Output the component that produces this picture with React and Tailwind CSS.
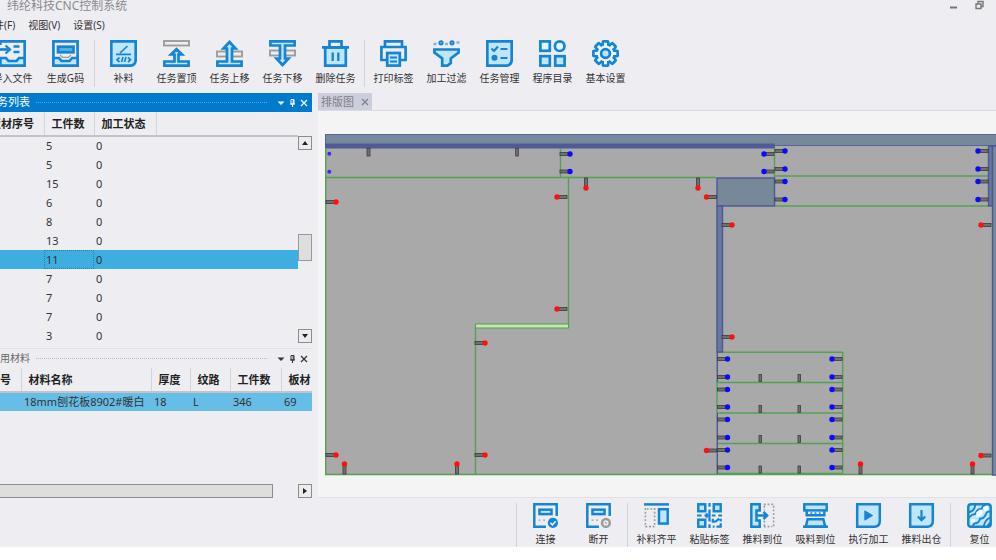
import React, { useState } from "react";

const BLUE = "#1585d3";
const LIGHT = "#bfe6fb";
const GRAY = "#9c9c9c";

function Icon({ children }) {
  return (
    <svg
      width="27"
      height="27"
      viewBox="0 0 27 27"
      fill="none"
      stroke={BLUE}
      strokeWidth="2.7"
      aria-hidden="true"
    >
      {children}
    </svg>
  );
}

const CARD = "M1.3 1.3H25.7V19.5Q25.7 25.7 19.5 25.7H1.3Z";

const icons = {
  importFile: (
    <Icon>
      <path d="M1.3 5V1.3H25.7V18" />
      <path d="M1.4 18H7L9.5 21H17.5L20 18H25.6V25.6H1.4Z" fill={LIGHT} />
      <path d="M0 9.5H9" />
      <path d="M6.5 5.5L11 9.5L6.5 13.5" strokeWidth="2.3" />
      <path d="M14.5 6.5H20.5M14.5 12H20.5" strokeWidth="2.3" />
    </Icon>
  ),
  gcode: (
    <Icon>
      <rect x="1.4" y="1.4" width="24.2" height="24.2" />
      <rect x="6" y="6.7" width="15.5" height="5.6" fill="#59afe4" />
      <path d="M8 15L10.5 17.3H16.5L19 15" stroke={GRAY} strokeWidth="1.2" />
      <path d="M1.4 18H7L9.5 21H17.5L20 18H25.6V25.6H1.4Z" fill={LIGHT} />
    </Icon>
  ),
  patch: (
    <Icon>
      <path d={CARD} fill={LIGHT} />
      <path
        d="M6 14.3H21M10 13L17.5 6M9.5 17.5L7 19.7L9.5 22M18 17.5L20.5 19.7L18 22M13 17L11.5 22M16 17L14.5 22"
        strokeWidth="1.7"
      />
    </Icon>
  ),
  toTop: (
    <Icon>
      <rect x="1" y="1" width="25" height="4.5" stroke={GRAY} strokeWidth="1.9" />
      <path d="M13.5 9.2L19 14.5H15.5V21.5H25.6V25.6H1.4V21.5H11.5V14.5H8Z" fill={LIGHT} />
    </Icon>
  ),
  moveUp: (
    <Icon>
      <rect x="1" y="11.5" width="25" height="5" stroke={GRAY} strokeWidth="1.9" />
      <path d="M13.5 2L19.5 8.5H16V21.5H25.6V25.6H1.4V21.5H11V8.5H7.5Z" fill={LIGHT} />
    </Icon>
  ),
  moveDown: (
    <Icon>
      <rect x="1" y="10.5" width="25" height="5" stroke={GRAY} strokeWidth="1.9" />
      <path d="M13.5 25L19.5 18.5H16V5.5H25.6V1.4H1.4V5.5H11V18.5H7.5Z" fill={LIGHT} />
    </Icon>
  ),
  trash: (
    <Icon>
      <path d="M3.2 7.5H23.8V25.6H3.2Z" fill={LIGHT} />
      <path d="M0 7.3H27M7.5 7V1.4H19.5V7" />
      <path d="M10.7 12.5V21M16.3 12.5V21" strokeWidth="2.3" />
    </Icon>
  ),
  print: (
    <Icon>
      <path d="M5 6V1.4H22V6" />
      <path d="M6 20H1.4V7H25.6V20H21" />
      <rect x="7.2" y="13" width="12.6" height="12.6" fill={LIGHT} />
      <path d="M10 17.5H17M10 21.5H17" strokeWidth="1.8" />
    </Icon>
  ),
  filter: (
    <Icon>
      <path d="M1.4 9.5H25.6V12.5L17.8 18.5V23L14.5 25.6H9.2V18.5L1.4 12.5Z" fill={LIGHT} />
      <circle cx="8" cy="2.8" r="1.6" strokeWidth="2" />
      <circle cx="19" cy="2.8" r="1.6" strokeWidth="2" />
      <path d="M0.5 4H3.5M12 4H15M23.5 2.5H26.5" stroke="#74b9e5" />
    </Icon>
  ),
  manage: (
    <Icon>
      <path d={CARD} fill={LIGHT} />
      <path d="M5.5 8.5L8 11L12 6.5M14.5 9H21.5M14.5 18H21.5" strokeWidth="2.2" />
      <circle cx="8.5" cy="17.8" r="2" fill={BLUE} strokeWidth="2" />
    </Icon>
  ),
  catalog: (
    <Icon>
      <rect x="1.4" y="1.4" width="9.4" height="9.4" fill="#e3f4fd" />
      <circle cx="20.7" cy="6.2" r="4.8" fill="#e3f4fd" />
      <rect x="1.4" y="16.2" width="9.4" height="9.4" fill={LIGHT} />
      <rect x="16.2" y="16.2" width="9.4" height="9.4" fill={LIGHT} />
    </Icon>
  ),
  gear: (
    <Icon>
      {[0, 45, 90, 135, 180, 225, 270, 315].map((a) => (
        <rect
          key={a}
          x="9.5"
          y="0"
          width="8"
          height="7"
          rx="2"
          fill={BLUE}
          stroke="none"
          transform={`rotate(${a} 13.5 13.5)`}
        />
      ))}
      <circle cx="13.5" cy="13.5" r="9.3" fill="#e9f4fb" />
      {[0, 45, 90, 135, 180, 225, 270, 315].map((a) => (
        <rect
          key={a}
          x="12"
          y="2.7"
          width="3"
          height="4"
          fill="#e9f4fb"
          stroke="none"
          transform={`rotate(${a} 13.5 13.5)`}
        />
      ))}
      <circle cx="13.5" cy="13.5" r="4.4" fill={LIGHT} />
    </Icon>
  ),
  connect: (
    <Icon>
      <path d="M14 25.6H1.4V1.4H25.6V14" />
      <rect x="7" y="7.2" width="13" height="4.8" fill={LIGHT} />
      <path d="M6 18.5H8M11 18.5H13" stroke={GRAY} strokeWidth="1.6" />
      <circle cx="21.5" cy="21.5" r="5.5" fill={BLUE} stroke="none" />
      <path d="M18.8 21.5L21 23.6L24.5 19.8" stroke="#e8f5fd" strokeWidth="1.6" />
    </Icon>
  ),
  disconnect: (
    <Icon>
      <path d="M14 25.6H1.4V1.4H25.6V14" />
      <rect x="7" y="7.2" width="13" height="4.8" fill={LIGHT} />
      <path d="M6 18.5H8M11 18.5H13" stroke={GRAY} strokeWidth="1.6" />
      <circle cx="21.5" cy="21.5" r="4.2" fill="#eeeef2" stroke={GRAY} strokeWidth="2.8" />
      <path d="M20.5 20.5L22.5 22.5" stroke={GRAY} strokeWidth="1.2" />
    </Icon>
  ),
  align: (
    <Icon>
      <path d="M0 1.5H27" />
      <path
        d="M1.5 5.5V26M1.5 25.5H11M11.5 5.5V26M3 6.5H11"
        stroke={GRAY}
        strokeWidth="1.7"
        strokeDasharray="2 2"
      />
      <rect x="16.2" y="6.7" width="9.4" height="15.5" fill={LIGHT} />
    </Icon>
  ),
  label: (
    <Icon>
      <rect x="1.4" y="1.4" width="7.5" height="7.5" fill={LIGHT} />
      <rect x="18.1" y="1.4" width="7.5" height="7.5" fill={LIGHT} />
      <rect x="1.4" y="18.1" width="7.5" height="7.5" fill={LIGHT} />
      <path
        d="M13.5 0V4M13.5 7V20M13.5 23V27M0 13.5H5M8 13.5H13M16 13.5H20M23 13.5H27M10.5 11V16M17 17V20H20M25.6 17V20M25.6 22V25.6H21M17 25.6H19M20 20L24 17"
        strokeWidth="2.4"
      />
    </Icon>
  ),
  push: (
    <Icon>
      <path d="M1.4 1.4H10.5V8H7V19H10.5V25.6H1.4Z" fill={LIGHT} />
      <path
        d="M15 1.5H26M25.5 3V26M15 25.5H24M15.5 3V8M15.5 19V25"
        stroke={GRAY}
        strokeWidth="1.7"
        strokeDasharray="2 2"
      />
      <path d="M7 13.5H18M14.5 9.5L18.5 13.5L14.5 17.5" />
    </Icon>
  ),
  suction: (
    <Icon>
      <rect x="1.4" y="1.4" width="24.2" height="6.6" fill={LIGHT} />
      <path d="M4 8V13.3H23V8" />
      <path d="M8 10.8H10M12.5 10.8H14.5M17 10.8H19" strokeWidth="1.6" />
      <path d="M5 17.5H22L24 25.6H3Z" fill={LIGHT} />
      <path d="M0 25.6H27" />
    </Icon>
  ),
  run: (
    <Icon>
      <path d={CARD} fill={LIGHT} />
      <path d="M9.5 8.5L18 13.5L9.5 18.5Z" fill={BLUE} strokeWidth="1" />
    </Icon>
  ),
  output: (
    <Icon>
      <path d={CARD} fill={LIGHT} />
      <path d="M13.5 7.5V18M9.5 14.5L13.5 18.5L17.5 14.5" strokeWidth="2.4" />
    </Icon>
  ),
  reset: (
    <Icon>
      <rect x="1.4" y="1.4" width="24.2" height="24.2" rx="3" fill={LIGHT} />
      <path
        d="M2 10Q8 9 9 2M2 16Q5 12 9 12Q11 6 16 6Q17 2 20 2M25 9Q21 9 20 13Q18 17 14 17Q13 22 8 22L6 25M25 16Q20 17 18 25M25 21L22 25"
        strokeWidth="2"
      />
      <path
        d="M10 10L14 7L18 9L15 14L10 15ZM17 5L22 3L23 7L19 9ZM4 18L9 17L9 20L4 22Z"
        fill="#f4fafe"
        stroke="none"
      />
    </Icon>
  ),
};

const topTools = [
  [
    { icon: "importFile", text: "导入文件" },
    { icon: "gcode", text: "生成G码" },
  ],
  [
    { icon: "patch", text: "补料" },
    { icon: "toTop", text: "任务置顶" },
    { icon: "moveUp", text: "任务上移" },
    { icon: "moveDown", text: "任务下移" },
    { icon: "trash", text: "删除任务" },
  ],
  [
    { icon: "print", text: "打印标签" },
    { icon: "filter", text: "加工过滤" },
    { icon: "manage", text: "任务管理" },
    { icon: "catalog", text: "程序目录" },
    { icon: "gear", text: "基本设置" },
  ],
];

const bottomTools = [
  [
    { icon: "connect", text: "连接" },
    { icon: "disconnect", text: "断开" },
  ],
  [
    { icon: "align", text: "补料齐平" },
    { icon: "label", text: "粘贴标签" },
    { icon: "push", text: "推料到位" },
    { icon: "suction", text: "吸料到位" },
    { icon: "run", text: "执行加工" },
    { icon: "output", text: "推料出仓" },
  ],
  [{ icon: "reset", text: "复位" }],
];

const tasks = [5, 5, 15, 6, 8, 13, 11, 7, 7, 7, 3];

function ToolGroups({ groups }) {
  return groups.map((group, i) => (
    <React.Fragment key={i}>
      {i > 0 && <div className="w-px mx-[2px] shrink-0 bg-[#d2d3dc]"></div>}
      {group.map((tool) => (
        <button
          key={tool.text}
          className="w-[53px] shrink-0 flex flex-col items-center gap-[3px] cursor-pointer"
        >
          {icons[tool.icon]}
          <span className="text-[10px] leading-4 whitespace-nowrap">{tool.text}</span>
        </button>
      ))}
    </React.Fragment>
  ));
}

function PanelTitle({ title, active }) {
  return (
    <div
      className={
        active
          ? "h-[19px] flex items-center gap-[6px] pr-1 bg-[#007acc] text-white text-[11px]"
          : "h-[19px] flex items-center gap-[6px] pr-1 text-[#666] text-[10px]"
      }
    >
      <h2 className={active ? "-ml-[14px] whitespace-nowrap" : "-ml-[10px] whitespace-nowrap"}>
        {title}
      </h2>
      <div
        className={
          active
            ? "flex-1 border-t border-dotted border-[#59a8de]"
            : "flex-1 border-t border-dotted border-[#b9b9c0]"
        }
      ></div>
      <div className={active ? "flex gap-1 pl-1 text-white" : "flex gap-1 pl-1 text-[#333]"}>
        <button aria-label="菜单">
          <svg width="8" height="8" viewBox="0 0 8 8" fill="currentColor">
            <path d="M0.5 2.5H7.5L4 6Z" />
          </svg>
        </button>
        <button aria-label="固定">
          <svg width="7" height="8" viewBox="0 0 7 8" fill="none" stroke="currentColor">
            <path d="M2 .5H5V5H2ZM4.2 1V5M1 5H6M3.5 5V8" />
          </svg>
        </button>
        <button aria-label="关闭">
          <svg width="8" height="8" viewBox="0 0 8 8" fill="none" stroke="currentColor" strokeWidth="1.3">
            <path d="M1 1L7 7M7 1L1 7" />
          </svg>
        </button>
      </div>
    </div>
  );
}

function ScrollButton({ label, d }) {
  return (
    <button
      aria-label={label}
      className="w-[14px] h-[14px] shrink-0 flex items-center justify-center border border-[#8c8c8c] bg-[#ececec]"
    >
      <svg width="6" height="6" viewBox="0 0 6 6" fill="#222">
        <path d={d} />
      </svg>
    </button>
  );
}

// x, y is the head of the drill; side is where the shaft goes from it
function Pin({ x, y, side, color }) {
  const shaft = {
    left: { x: x - 10, y: y - 1.5, width: 9, height: 3 },
    right: { x: x + 1, y: y - 1.5, width: 9, height: 3 },
    up: { x: x - 1.5, y: y - 10, width: 3, height: 9 },
    down: { x: x - 1.5, y: y + 1, width: 3, height: 9 },
  }[side];
  return (
    <g>
      <rect {...shaft} fill="#707070" stroke="#3c3c3c" strokeWidth="0.8" />
      <circle cx={x} cy={y} r="2.7" fill={color} />
    </g>
  );
}

const redPins = [
  [336, 202, "left"],
  [557, 197, "right"],
  [586, 188, "up"],
  [557, 309, "right"],
  [485, 343, "left"],
  [485, 455, "left"],
  [336, 455, "left"],
  [344.5, 464, "down"],
  [457, 464, "down"],
  [698, 188, "up"],
  [706.5, 197, "right"],
  [732, 225, "left"],
  [732, 337, "left"],
  [981, 225, "right"],
  [706.5, 450.5, "right"],
  [860.5, 464, "down"],
  [972.5, 464, "down"],
  [981, 455.5, "right"],
];

const bluePins = [
  [570, 154, "left"],
  [570, 171.5, "left"],
  [764, 154, "right"],
  [764, 171.5, "right"],
  ...[151, 169, 181.5, 199.5].flatMap((y) => [
    [785, y, "left"],
    [978, y, "right"],
  ]),
  ...[359, 377, 389.5, 407, 419.5, 437.5, 450, 467.5].flatMap((y) => [
    [727.5, y, "left"],
    [832, y, "right"],
  ]),
];

function Layout() {
  return (
    <svg viewBox="325 133 671 343" className="block w-full" role="img" aria-label="排版图">
      <rect x="325.5" y="134" width="671" height="341" fill="#a9a9a9" />
      <rect x="325.5" y="134.5" width="680" height="11" fill="#778899" stroke="#5863a3" />
      <rect x="325" y="143.5" width="450" height="5" fill="#505a98" />
      <g fill="none" stroke="#55a055" strokeWidth="1.4">
        <path d="M325.7 148V474.5H996" />
        <path d="M326 177.5H716M560.5 148V177.5M568.5 178V328M475.5 324V474" />
        <path d="M774.5 148V178M775 176H988M775 206H988" />
        <path d="M717 352.3H843M717 382.5H843M717 413H843M717 443.5H843M717 473.5H843M842.7 352V474M717 382V413" />
      </g>
      <rect x="475.5" y="324" width="93" height="4" fill="#c5e6b0" stroke="#55a055" />
      <g fill="#778899" stroke="#4a5798" strokeWidth="1.4">
        <rect x="717" y="178" width="57.5" height="28" />
        <rect x="717" y="206" width="5.5" height="146" fill="#69799d" />
        <rect x="988.5" y="146" width="4" height="60" fill="#69799d" />
        <rect x="992.5" y="146" width="6" height="329" />
        <path d="M717.3 352V382M717.3 413V474" />
      </g>
      <g fill="#707070" stroke="#3c3c3c" strokeWidth="0.8">
        <rect x="367" y="148.5" width="3" height="7.5" />
        <rect x="515.7" y="148.5" width="2.6" height="7.5" />
        {[374.5, 405.5, 435.5, 466].map((y) => (
          <React.Fragment key={y}>
            <rect x="759" y={y} width="2.6" height="7" />
            <rect x="798" y={y} width="2.6" height="7" />
          </React.Fragment>
        ))}
      </g>
      <circle cx="329.3" cy="153.7" r="2" fill="#3030f0" />
      <circle cx="329.3" cy="171.7" r="2" fill="#3030f0" />
      {bluePins.map(([x, y, side]) => (
        <Pin key={`${x}-${y}`} x={x} y={y} side={side} color="#0a0aff" />
      ))}
      {redPins.map(([x, y, side]) => (
        <Pin key={`${x}-${y}`} x={x} y={y} side={side} color="#ff1010" />
      ))}
    </svg>
  );
}

export default function App() {
  const [selected, setSelected] = useState(6);

  return (
    <div className="overflow-hidden bg-[#eeeef2] text-[#333] font-['Noto_Sans','Noto_Sans_CJK_SC',sans-serif]">
      <header>
        <div className="h-[15px] flex items-start justify-between pl-[7px] pr-3">
          <h1 className="-mt-[3px] text-[12px] leading-[18px] text-[#8a8a8e]">纬纶科技CNC控制系统</h1>
          <div className="flex gap-[17px] text-[#777]">
            <button aria-label="最小化">
              <svg width="9" height="10" viewBox="0 0 9 10" stroke="currentColor" strokeWidth="2">
                <path d="M1 7.5H8" />
              </svg>
            </button>
            <button aria-label="还原">
              <svg width="9" height="10" viewBox="0 0 9 10" fill="none" stroke="currentColor" strokeWidth="1.4">
                <path d="M1 4H6V8.5H1ZM3 3.5V1.5H8V6.5H6.5" />
              </svg>
            </button>
          </div>
        </div>
        <nav className="-ml-4 h-[25px] flex items-start gap-[13px] pt-[2px] text-[10px] leading-4">
          <button>文件(F)</button>
          <button>视图(V)</button>
          <button>设置(S)</button>
        </nav>
        <div className="-ml-[14px] mb-[6px] h-[47px] flex">
          <ToolGroups groups={topTools} />
        </div>
      </header>

      <main className="flex gap-[6px]">
        <aside className="w-[312px] shrink-0 flex flex-col overflow-hidden">
          <section className="h-[255px] overflow-hidden">
            <PanelTitle title="任务列表" active />
            <div className="flex">
              <div className="flex-1 overflow-hidden">
                <table className="-ml-[18px] w-[316px] table-fixed border-collapse text-[11px] leading-[18px]">
                  <colgroup>
                    <col className="w-[62px]" />
                    <col className="w-[50px]" />
                    <col className="w-[62px]" />
                    <col />
                  </colgroup>
                  <thead>
                    <tr className="h-6 border-b-2 border-[#c4c4c8] text-left whitespace-nowrap text-[#222]">
                      <th className="p-0 pl-2 border-r border-r-[#d4d4da]">板材序号</th>
                      <th className="p-0 pl-[7px] border-r border-r-[#d4d4da]">工件数</th>
                      <th className="p-0 pl-[7px] border-r border-r-[#d4d4da]">加工状态</th>
                      <th></th>
                    </tr>
                  </thead>
                  <tbody>
                    {tasks.map((count, i) => (
                      <tr
                        key={i}
                        onClick={() => setSelected(i)}
                        className={i === selected ? "h-[19px] bg-[#3eaee0]" : "h-[19px]"}
                      >
                        <td className="p-0"></td>
                        <td
                          className={
                            i === selected
                              ? "p-0 pl-[2px] outline-1 -outline-offset-1 outline-dotted outline-[#2b7ea5]"
                              : "p-0 pl-[2px]"
                          }
                        >
                          {count}
                        </td>
                        <td className="p-0 pl-[2px]">0</td>
                        <td></td>
                      </tr>
                    ))}
                  </tbody>
                </table>
              </div>
              <div className="mt-6 h-[207px] w-[14px] flex flex-col">
                <ScrollButton label="向上滚动" d="M0 5L3 1L6 5Z" />
                <div className="flex-[84]"></div>
                <div className="h-[27px] border border-[#9a9a9a] bg-[#dedede]"></div>
                <div className="flex-[68]"></div>
                <ScrollButton label="向下滚动" d="M0 1L3 5L6 1Z" />
              </div>
            </div>
          </section>

          <section className="flex-1 flex flex-col border-t border-[#e0e0e6]">
            <PanelTitle title="使用材料" />
            <div className="overflow-hidden">
              <table className="-ml-[18px] w-[346px] table-fixed border-collapse text-[11px] leading-[18px]">
                <colgroup>
                  <col className="w-[39px]" />
                  <col className="w-[130px]" />
                  <col className="w-[39px]" />
                  <col className="w-[40px]" />
                  <col className="w-[51px]" />
                  <col />
                </colgroup>
                <thead>
                  <tr className="h-6 border-b-2 border-[#c4c4c8] text-left whitespace-nowrap text-[#222]">
                    <th className="p-0 pl-[7px] border-r border-r-[#d4d4da]">序号</th>
                    <th className="p-0 pl-[7px] border-r border-r-[#d4d4da]">材料名称</th>
                    <th className="p-0 pl-[7px] border-r border-r-[#d4d4da]">厚度</th>
                    <th className="p-0 pl-[7px] border-r border-r-[#d4d4da]">纹路</th>
                    <th className="p-0 pl-[7px] border-r border-r-[#d4d4da]">工件数</th>
                    <th className="p-0 pl-[7px]">板材</th>
                  </tr>
                </thead>
                <tbody>
                  <tr className="h-[19px] bg-[#66bde6] whitespace-nowrap">
                    <td className="p-0"></td>
                    <td className="p-0 pl-[3px]">18mm刨花板8902#暖白</td>
                    <td className="p-0 pl-[3px]">18</td>
                    <td className="p-0 pl-[3px]">L</td>
                    <td className="p-0 pl-[3px]">346</td>
                    <td className="p-0 pl-[3px]">69</td>
                  </tr>
                </tbody>
              </table>
            </div>
            <div className="mt-auto flex justify-between">
              <div className="w-[273px] h-[14px] border border-l-0 border-[#8c8c8c] bg-[#dedede]"></div>
              <ScrollButton label="向右滚动" d="M1 0L5 3L1 6Z" />
            </div>
          </section>
        </aside>

        <section className="flex-1 min-w-0 flex flex-col">
          <div className="flex border-b border-[#d9dae3]">
            <div className="h-[17px] flex items-center gap-[7px] px-[3px] bg-[#cccedb] text-[#808088]">
              <span className="text-[11px] leading-4">排版图</span>
              <button aria-label="关闭排版图">
                <svg width="8" height="8" viewBox="0 0 8 8" fill="none" stroke="currentColor" strokeWidth="1.2">
                  <path d="M1 1L7 7M7 1L1 7" />
                </svg>
              </button>
            </div>
          </div>
          <div className="flex-1 pl-[7px] pt-[22px] pb-[21px] bg-[#f4f4f4] border-b border-[#dfe0e8]">
            <Layout />
          </div>
        </section>
      </main>

      <footer className="-mr-[10px] h-[49px] flex justify-end pt-[5px] bg-[#eeeef2]">
        <div className="w-px mx-[2px] shrink-0 bg-[#d2d3dc]"></div>
        <ToolGroups groups={bottomTools} />
      </footer>
      <div className="h-[13px] bg-white"></div>
    </div>
  );
}
